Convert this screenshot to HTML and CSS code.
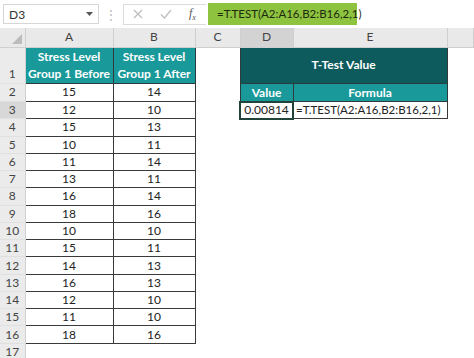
FILE: index.html
```html
<!DOCTYPE html>
<html lang="en">
<head>
    <meta charset="UTF-8">
    <title>T-Test Value</title>
    <link rel="stylesheet" href="styles.css">
</head>
<body>
    <div class="toolbar">
        <div class="namebox">
            <span>D3</span>
            <svg class="caret" width="7" height="4" viewBox="0 0 7 4"><path d="M0 0h7L3.5 4z" fill="#555"/></svg>
        </div>
        <div class="grip">&#8942;</div>
        <div class="fxbox">
            <svg width="10" height="10" viewBox="0 0 10 10"><path d="M1 1l8 8M9 1l-8 8" stroke="#bdbdbd" stroke-width="1.2"/></svg>
            <svg width="12" height="10" viewBox="0 0 12 10"><path d="M1 5.5l3.5 3.5L11 1" stroke="#bdbdbd" stroke-width="1.2" fill="none"/></svg>
            <span class="fx">f<sub>x</sub></span>
        </div>
        <div class="formula">=T.TEST(A2:A16,B2:B16,2,1)</div>
    </div>

    <table class="sheet">
        <colgroup>
            <col class="c-rh"><col class="c-a"><col class="c-b"><col class="c-c"><col class="c-d"><col class="c-e"><col>
        </colgroup>
        <tr class="colhead">
            <th class="corner"><span class="tri"></span></th>
            <th>A</th><th>B</th><th>C</th><th class="sel">D</th><th>E</th><th></th>
        </tr>
        <tr class="r1">
            <th class="rh">1</th>
            <td class="head">Stress Level<br>Group 1 Before</td>
            <td class="head">Stress Level<br>Group 1 After</td>
            <td></td>
            <td class="title" colspan="2">T-Test Value</td>
            <td></td>
        </tr>
        <tr>
            <th class="rh">2</th><td class="num">15</td><td class="num">14</td><td></td>
            <td class="head">Value</td><td class="head">Formula</td><td></td>
        </tr>
        <tr>
            <th class="rh rsel">3</th><td class="num">12</td><td class="num">10</td><td></td>
            <td class="num active">0.00814</td><td class="num left">=T.TEST(A2:A16,B2:B16,2,1)</td><td></td>
        </tr>
        <tr><th class="rh">4</th><td class="num">15</td><td class="num">13</td><td colspan="4"></td></tr>
        <tr><th class="rh">5</th><td class="num">10</td><td class="num">11</td><td colspan="4"></td></tr>
        <tr><th class="rh">6</th><td class="num">11</td><td class="num">14</td><td colspan="4"></td></tr>
        <tr><th class="rh">7</th><td class="num">13</td><td class="num">11</td><td colspan="4"></td></tr>
        <tr><th class="rh">8</th><td class="num">16</td><td class="num">14</td><td colspan="4"></td></tr>
        <tr><th class="rh">9</th><td class="num">18</td><td class="num">16</td><td colspan="4"></td></tr>
        <tr><th class="rh">10</th><td class="num">10</td><td class="num">10</td><td colspan="4"></td></tr>
        <tr><th class="rh">11</th><td class="num">15</td><td class="num">11</td><td colspan="4"></td></tr>
        <tr><th class="rh">12</th><td class="num">14</td><td class="num">13</td><td colspan="4"></td></tr>
        <tr><th class="rh">13</th><td class="num">16</td><td class="num">13</td><td colspan="4"></td></tr>
        <tr><th class="rh">14</th><td class="num">12</td><td class="num">10</td><td colspan="4"></td></tr>
        <tr><th class="rh">15</th><td class="num">11</td><td class="num">10</td><td colspan="4"></td></tr>
        <tr><th class="rh">16</th><td class="num">18</td><td class="num">16</td><td colspan="4"></td></tr>
        <tr><th class="rh">17</th><td></td><td></td><td colspan="4"></td></tr>
    </table>
</body>
</html>
```

FILE: styles.css
```css
body {
    margin: 0;
    background: #fff;
    font-family: Lato, "Liberation Sans", sans-serif;
    overflow: hidden;
}

.toolbar {
    height: 28px;
    display: flex;
    align-items: center;
    background: #fff;
}

.namebox {
    margin-left: 3px;
    width: 96px;
    height: 20px;
    box-sizing: border-box;
    border: 1px solid #d6d6d6;
    display: flex;
    align-items: center;
    justify-content: space-between;
    padding: 0 5px 0 5px;
    font-size: 12px;
    color: #333;
}

.grip {
    width: 24px;
    text-align: center;
    color: #b5b5b5;
    font-size: 12px;
}

.fxbox {
    width: 83px;
    height: 21px;
    box-sizing: border-box;
    border: 1px solid #dcdcdc;
    border-right: none;
    display: flex;
    align-items: center;
    gap: 17px;
    padding-left: 9px;
}

.fx {
    font-family: "Liberation Serif", serif;
    font-style: italic;
    font-size: 12px;
    color: #555;
}

.fx sub {
    font-size: 8px;
}

.formula {
    margin-left: 2px;
    width: 149px;
    height: 22px;
    line-height: 22px;
    background: #8dc33e;
    color: #1e2a10;
    font-size: 11.5px;
    padding-left: 9px;
    box-sizing: border-box;
}

.sheet {
    border-collapse: collapse;
    table-layout: fixed;
    width: 474px;
    font-size: 12px;
    color: #222;
}

.c-rh { width: 25px; }
.c-a { width: 88px; }
.c-b { width: 82px; }
.c-c { width: 45px; }
.c-d { width: 53px; }
.c-e { width: 154px; }

.sheet tr {
    height: 17.27px;
}

.sheet td, .sheet th {
    padding: 0;
    line-height: 14px;
    overflow: hidden;
    white-space: nowrap;
}

.sheet tr.colhead {
    height: 19px;
}

.colhead th {
    background: #e9e9e9;
    color: #444;
    font-weight: normal;
    font-size: 12px;
    border-right: 1px solid #cfcfcf;
    border-bottom: 1px solid #cfcfcf;
}

.colhead th.sel {
    background: #d3d3d3;
}

.corner {
    position: relative;
}

.tri {
    position: absolute;
    right: 3px;
    bottom: 3px;
    width: 0;
    height: 0;
    border-left: 10px solid transparent;
    border-bottom: 10px solid #bcbcbc;
}

.rh {
    background: #ebebeb;
    color: #444;
    font-weight: normal;
    font-size: 12px;
    text-align: center;
    border-right: 1px solid #d0d0d0;
    border-bottom: 1px solid #e0e0e0;
}

.rh.rsel {
    background: #d8d8d8;
}

.sheet tr.r1 {
    height: 36px;
}

.r1 .rh {
    vertical-align: bottom;
    padding-bottom: 2px;
}

.head {
    background: #19999a;
    color: #fff;
    font-weight: bold;
    font-size: 12px;
    text-align: center;
    line-height: 17px !important;
    border: 1px solid #2f3a3a;
}

.title {
    background: #0e5b5e;
    color: #fff;
    font-weight: bold;
    font-size: 12px;
    text-align: center;
    border: 1px solid #2f3a3a;
}

.num {
    text-align: center;
    border: 1px solid #3a3a3a;
    font-size: 12px;
}

.left {
    text-align: left;
    font-size: 11.5px;
    padding-left: 2px !important;
}

.active {
    border: 2px solid #20443a;
}
```
